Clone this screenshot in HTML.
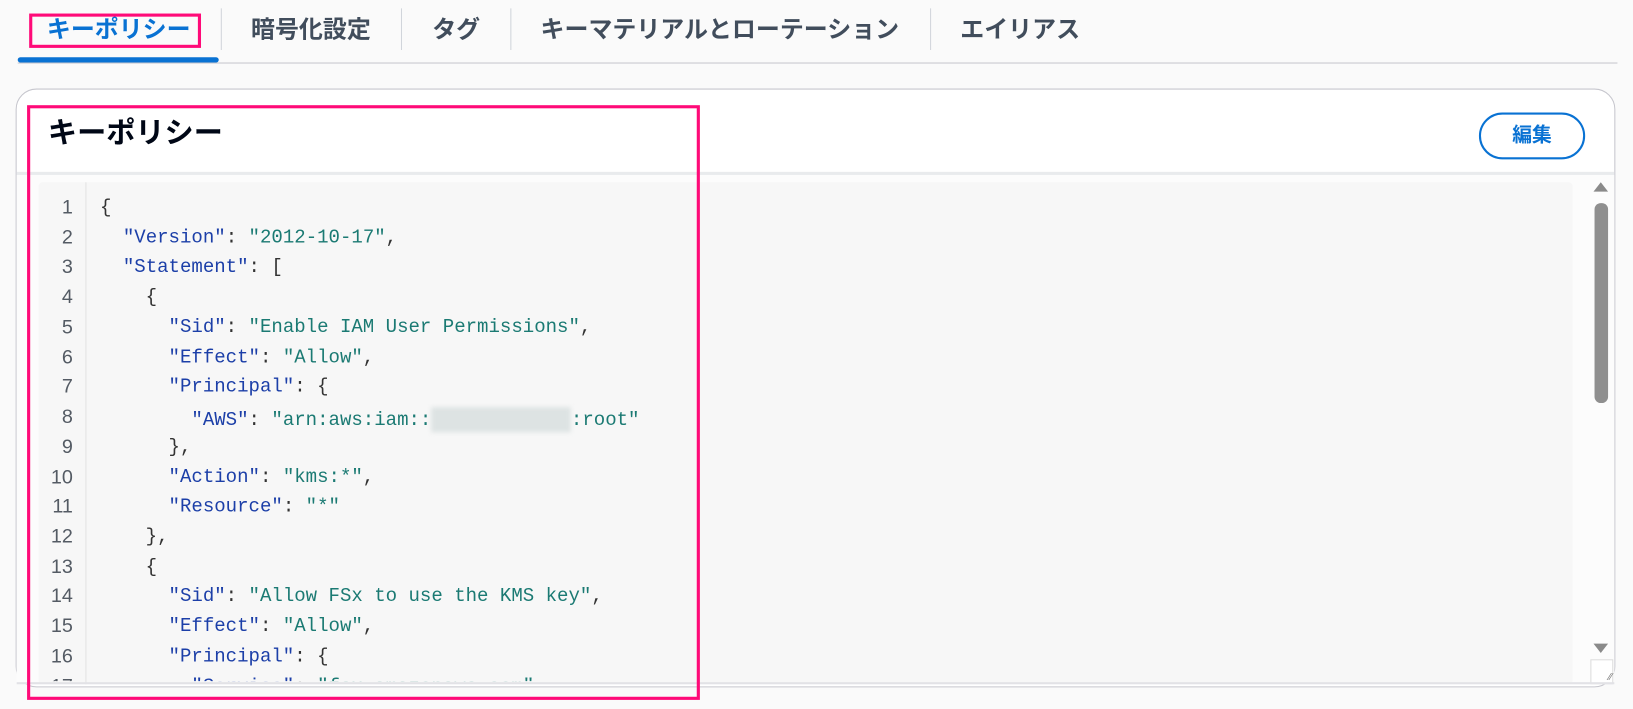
<!DOCTYPE html>
<html><head><meta charset="utf-8"><style>
*{margin:0;padding:0;box-sizing:border-box}
body{width:1633px;height:709px;background:#fafafa;position:relative;overflow:hidden;font-family:"Liberation Sans","Noto Sans CJK JP",sans-serif}
#w{position:absolute;left:0;top:0;width:1568px;height:681px;transform:scale(1.0415);transform-origin:0 0}
.tab{position:absolute;top:13px;font-size:23px;font-weight:bold;color:#414d5c;line-height:30px;white-space:nowrap}
.sep{position:absolute;top:8px;width:1px;height:40px;background:#d1d5db}
.card{position:absolute;left:15px;top:85px;width:1536px;height:575px;border:1px solid #c6c6cd;border-radius:20px;background:#fff;overflow:hidden}
.code{position:absolute;left:37px;top:175px;width:1473px;height:482px;background:#f7f7f7;border-radius:4px;overflow:hidden}
.ln{position:absolute;left:35px;width:35px;text-align:right;font-family:"Liberation Sans",sans-serif;font-size:19px;color:#545b64}
.cl{position:absolute;left:96px;font-family:"Liberation Mono",monospace;font-size:18.3px;color:#333;white-space:pre}
.k{color:#1c3fa8}.s{color:#1b7a73}
#code{position:absolute;left:0;top:0;width:1520px;height:654px;overflow:hidden}
</style></head><body><div id="w">
<div class="tab" style="left:45px;color:#0972d3">キーポリシー</div>
<div class="sep" style="left:212px"></div>
<div class="tab" style="left:241px">暗号化設定</div>
<div class="sep" style="left:385px"></div>
<div class="tab" style="left:415px">タグ</div>
<div class="sep" style="left:490px"></div>
<div class="tab" style="left:519px">キーマテリアルとローテーション</div>
<div class="sep" style="left:893px"></div>
<div class="tab" style="left:922px">エイリアス</div>
<div style="position:absolute;left:17px;top:60px;width:1536px;height:1px;background:#c6c6cd"></div>
<div style="position:absolute;left:17px;top:55px;width:193px;height:5px;background:#0972d3;border-radius:3px"></div>
<div style="position:absolute;left:28px;top:13px;width:165px;height:33px;border:3px solid #ff0a78"></div>

<div class="card"></div>
<div style="position:absolute;left:46px;top:106px;font-size:28px;font-weight:bold;color:#000716">キーポリシー</div>
<div style="position:absolute;left:1420px;top:108px;width:102px;height:45px;border:2px solid #0972d3;border-radius:23px;color:#0972d3;font-size:19px;font-weight:bold;text-align:center;line-height:41px">編集</div>
<div style="position:absolute;left:16px;top:165px;width:1534px;height:3px;background:#e9ebed"></div>
<div style="position:absolute;left:16px;top:168px;width:1534px;height:489px;background:#fcfcfc"></div>
<div class="code"></div>
<div style="position:absolute;left:82px;top:175px;width:1px;height:482px;background:#e3e3e3"></div>
<div style="position:absolute;left:1530px;top:175px;width:0;height:0;border-left:7px solid transparent;border-right:7px solid transparent;border-bottom:9px solid #8a8a8a"></div>
<div style="position:absolute;left:1531px;top:195px;width:13px;height:192px;background:#8f8f8f;border-radius:6px"></div>
<div style="position:absolute;left:1530px;top:618px;width:0;height:0;border-left:7px solid transparent;border-right:7px solid transparent;border-top:9px solid #8a8a8a"></div>
<div style="position:absolute;left:1527px;top:633px;width:22px;height:24px;border:1px solid #ddd;background:#fff;font-size:10px;color:#777;text-align:right;line-height:34px">⁄⁄</div>

<div id="code"></div>
<div style="position:absolute;left:16px;top:655px;width:1534px;height:2px;background:#e2e2e6"></div>
<div style="position:absolute;left:26px;top:101px;width:646px;height:571px;border:3px solid #ff0a78"></div>
</div>
<script>
var lines=[
'{',
'  <span class="k">"Version"</span>: <span class="s">"2012-10-17"</span>,',
'  <span class="k">"Statement"</span>: [',
'    {',
'      <span class="k">"Sid"</span>: <span class="s">"Enable IAM User Permissions"</span>,',
'      <span class="k">"Effect"</span>: <span class="s">"Allow"</span>,',
'      <span class="k">"Principal"</span>: {',
'        <span class="k">"AWS"</span>: <span class="s">"arn:aws:iam::<span style="display:inline-block;width:134px;height:24px;vertical-align:middle;background:#dde3e3;filter:blur(2px)"></span>:root"</span>',
'      },',
'      <span class="k">"Action"</span>: <span class="s">"kms:*"</span>,',
'      <span class="k">"Resource"</span>: <span class="s">"*"</span>',
'    },',
'    {',
'      <span class="k">"Sid"</span>: <span class="s">"Allow FSx to use the KMS key"</span>,',
'      <span class="k">"Effect"</span>: <span class="s">"Allow"</span>,',
'      <span class="k">"Principal"</span>: {',
'        <span class="k">"Service"</span>: <span class="s">"fsx.amazonaws.com"</span>'
];
var h='';
for(var i=0;i<lines.length;i++){var y=189+i*28.73;
h+='<div class="ln" style="top:'+y+'px">'+(i+1)+'</div><div class="cl" style="top:'+(y+1)+'px">'+lines[i]+'</div>';}
document.getElementById('code').innerHTML=h;
</script>
</body></html>
